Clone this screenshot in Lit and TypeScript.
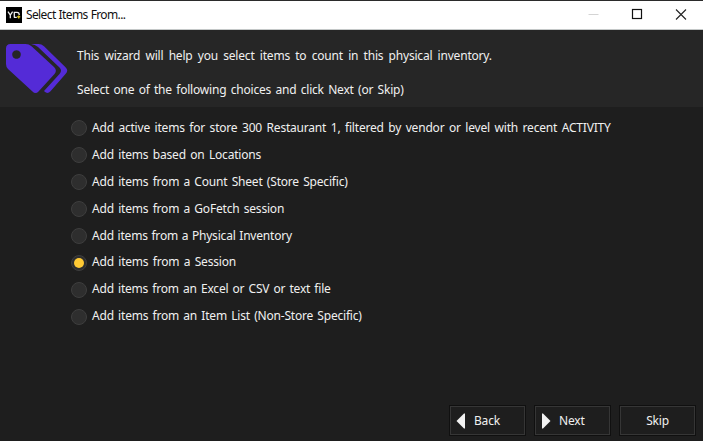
import { LitElement, html, css } from "lit";
import { customElement, state } from "lit/decorators.js";
import { classMap } from "lit/directives/class-map.js";
import { styleMap } from "lit/directives/style-map.js";

interface Line {
  text: string;
  ws: number;
  lift?: number;
}

const intro: Line[] = [
  { text: "This wizard will help you select items to count in this physical inventory.", ws: 2.35 },
  { text: "Select one of the following choices and click Next (or Skip)", ws: 1.42 },
];

const choices: Line[] = [
  { text: "Add active items for store 300 Restaurant 1, filtered by vendor or level with recent ACTIVITY", ws: 1.65 },
  { text: "Add items based on Locations", ws: 1.5 },
  { text: "Add items from a Count Sheet (Store Specific)", ws: 1.4 },
  { text: "Add items from a GoFetch session", ws: 1.4 },
  { text: "Add items from a Physical Inventory", ws: 0.8 },
  { text: "Add items from a Session", ws: 1.5, lift: 1 },
  { text: "Add items from an Excel or CSV or text file", ws: 1.25, lift: 1 },
  { text: "Add items from an Item List (Non-Store Specific)", ws: 1.35, lift: 1 },
];

const spacing = (l: Line) =>
  styleMap({ "word-spacing": `${l.ws}px`, "padding-bottom": `${(l.lift ?? 0) * 2}px` });

@customElement("app-root")
export class AppRoot extends LitElement {
  @state() private selected = 5;

  static styles = css`
    :host {
      display: flex;
      flex-direction: column;
      width: 703px;
      height: 441px;
      box-sizing: border-box;
      overflow: hidden;
      background: #1e1e1e;
      border-top: 1px solid #2b2b2b;
      color: #f0f0f0;
      font: 12px/16px "Noto Sans", "Open Sans", sans-serif;
      letter-spacing: -0.2px;
      white-space: nowrap;
    }
    .titlebar {
      display: flex;
      align-items: center;
      height: 28px;
      background: #fff;
      color: #111;
      border-bottom: 1px solid #c4c8c8;
      flex: none;
    }
    .logo { width: 16px; height: 16px; margin: 0 4px 0 6px; display: block; }
    .title { flex: 1; font-size: 12px; letter-spacing: -0.62px; word-spacing: 0.5px; }
    .control { display: block; width: 43px; height: 28px; }
    .header { display: flex; height: 77px; background: #262626; flex: none; }
    .tags { width: 64px; height: 52px; margin: 13px 8px 0 5px; flex: none; }
    .intro { display: flex; flex-direction: column; gap: 18px; padding-top: 18px; }
    .choices { flex: 1; padding: 7px 0 0 71px; }
    .choice { display: flex; align-items: center; height: 27px; gap: 5px; }
    .radio {
      width: 16px;
      height: 16px;
      box-sizing: border-box;
      border-radius: 50%;
      background: #2e2e2e;
      border: 1px solid #3e3e3e;
      display: flex;
      align-items: center;
      justify-content: center;
    }
    .radio.on::after { content: ""; width: 10px; height: 10px; border-radius: 50%; background: #ffca34; }
    .footer { display: flex; justify-content: flex-end; gap: 8px; padding: 0 7px 5px 0; }
    .button {
      width: 77px;
      height: 31px;
      box-sizing: border-box;
      border: 1px solid #101010;
      box-shadow: inset 0 0 0 1px #363636;
      background: #1e1e1e;
      color: inherit;
      font: inherit;
      letter-spacing: inherit;
      padding: 0 0 0 6px;
      display: flex;
      align-items: center;
      gap: 8px;
    }
    .button.plain { justify-content: center; padding-left: 0; }
    .arrow { width: 10px; height: 16px; margin-top: 1px; }
  `;

  private arrow(d: string) {
    return html`<svg class="arrow" viewBox="0 0 10 16"><path d=${d} fill="#f2f2f2" /></svg>`;
  }

  render() {
    return html`
      <div class="titlebar">
        <svg class="logo" viewBox="0 0 16 16">
          <rect width="16" height="16" fill="#000" />
          <path d="M2 4.700L4.300 8L6.600 4.700M4.300 8V11.200M8.300 4.700V10.600M8 5.300H11Q13.300 5.300 13.300 8M8 10.300H10.800" fill="none" stroke="#eee" stroke-width="1.300" />
          <path d="M11.200 9.800h3M12.700 8.500v3" stroke="#d9c21c" stroke-width="1.400" />
        </svg>
        <span class="title">Select Items From...</span>
        <svg class="control" viewBox="0 0 43 28"><path d="M14.500 13.500h10" stroke="#d4d4d4" /></svg>
        <svg class="control" viewBox="0 0 43 28"><rect x="15.500" y="8.500" width="9" height="9" fill="none" stroke="#111" stroke-width="1.200" /></svg>
        <svg class="control" viewBox="0 0 43 28"><path d="M16 8.500l10 10M26 8.500l-10 10" stroke="#222" stroke-width="1.100" /></svg>
      </div>
      <div class="header">
        <svg class="tags" viewBox="0 0 64 52">
          <path fill="#542bd7" fill-rule="evenodd"
            d="M5.500 1H20.500Q24 1 26.500 3.300L49 24Q52.500 27.500 49.500 31L33.500 48.500Q30.500 51.500 27.500 48.500L3 26Q1 24 1 21V5.500Q1 1 5.500 1ZM11.500 7.200a4.300 4.300 0 1 0 .01 0Z" />
          <path fill="#542bd7"
            d="M26 1H33.500Q36.500 1 39 3.300L60.500 24.200Q64 27.500 60.500 31L45.500 48.300Q42.500 51.500 39.500 48.500L39 48L54.500 31Q57.500 27.500 54.500 24.500L33 4Q30 1.500 26 1Z" />
        </svg>
        <div class="intro">
          ${intro.map((l) => html`<span style=${spacing(l)}>${l.text}</span>`)}
        </div>
      </div>
      <div class="choices">
        ${choices.map(
          (l, i) => html`<div class="choice" @click=${() => (this.selected = i)}>
            <span class=${classMap({ radio: true, on: i === this.selected })}></span>
            <span style=${spacing(l)}>${l.text}</span>
          </div>`
        )}
      </div>
      <div class="footer">
        <button class="button">${this.arrow("M9 0.500V15.500H8L0.500 8L8 0.500Z")}Back</button>
        <button class="button">${this.arrow("M1 0.500V15.500H2L9.500 8L2 0.500Z")}Next</button>
        <button class="button plain">Skip</button>
      </div>
    `;
  }
}
